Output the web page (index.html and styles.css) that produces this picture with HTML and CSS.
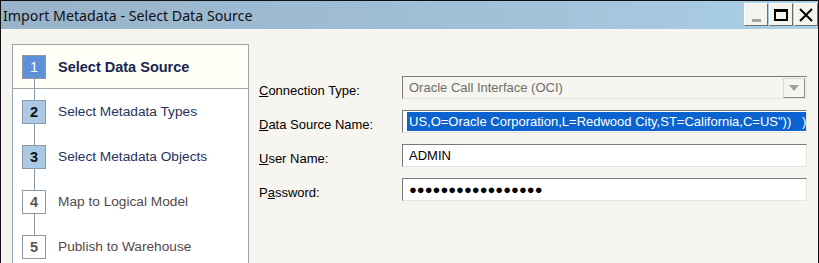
FILE: index.html
```html
<!DOCTYPE html>
<html lang="en">

<head>
    <meta charset="UTF-8">
    <title>Import Metadata - Select Data Source</title>
    <link rel="stylesheet" href="styles.css">
</head>

<body>
    <div class="window">
        <div class="titlebar">
            <span class="title">Import Metadata - Select Data Source</span>
            <div class="title-buttons">
                <div class="tbtn tbtn-min"><span class="min-bar"></span></div>
                <div class="tbtn tbtn-max"><span class="max-box"></span></div>
                <div class="tbtn tbtn-close">
                    <svg width="16" height="16" viewBox="0 0 16 16">
                        <path d="M2 2 L14 14 M14 2 L2 14" stroke="#000" stroke-width="2" fill="none"/>
                    </svg>
                </div>
            </div>
        </div>

        <div class="content">
            <!-- wizard steps -->
            <div class="steps">
                <div class="step step-current">
                    <span class="step-num">1</span>
                    <span class="step-label">Select Data Source</span>
                </div>
                <div class="step step-done">
                    <span class="step-num">2</span>
                    <span class="step-label">Select Metadata Types</span>
                </div>
                <div class="step step-done">
                    <span class="step-num">3</span>
                    <span class="step-label">Select Metadata Objects</span>
                </div>
                <div class="step step-todo">
                    <span class="step-num">4</span>
                    <span class="step-label">Map to Logical Model</span>
                </div>
                <div class="step step-todo">
                    <span class="step-num">5</span>
                    <span class="step-label">Publish to Warehouse</span>
                </div>
            </div>

            <!-- connection form -->
            <div class="form">
                <label class="form-label"><u>C</u>onnection Type:</label>
                <div class="field field-disabled">
                    <span class="field-text">Oracle Call Interface (OCI)</span>
                    <span class="combo-btn">
                        <svg width="10" height="6" viewBox="0 0 10 6"><path d="M0 0 H10 L5 6 Z" fill="#a0a0a0"/></svg>
                    </span>
                </div>

                <label class="form-label"><u>D</u>ata Source Name:</label>
                <div class="field">
                    <span class="field-text selected">US,O=Oracle Corporation,L=Redwood City,ST=California,C=US"))&nbsp;&nbsp;&nbsp;)</span>
                </div>

                <label class="form-label"><u>U</u>ser Name:</label>
                <div class="field">
                    <span class="field-text">ADMIN</span>
                </div>

                <label class="form-label">P<u>a</u>ssword:</label>
                <div class="field">
                    <span class="field-text dots">●●●●●●●●●●●●●●●●●</span>
                </div>
            </div>
        </div>
    </div>
</body>

</html>
```

FILE: styles.css
```css
body {
    margin: 0;
    background: #f6f5ef;
}

.window {
    width: 819px;
    height: 263px;
    box-sizing: border-box;
    border: 1px solid #101010;
    border-bottom: none;
    background: #f6f5ef;
    overflow: hidden;
}

/* title bar */
.titlebar {
    height: 28px;
    display: flex;
    align-items: center;
    justify-content: space-between;
    background: linear-gradient(to right, #98b3ca, #a0c1d8 60%, #aacfe7);
}

.title {
    font-family: "Noto Sans", sans-serif;
    font-size: 14.2px;
    color: #111;
    padding-left: 2px;
}

.title-buttons {
    display: flex;
    gap: 1px;
    align-self: flex-start;
    margin-top: 2px;
}

.tbtn {
    width: 24px;
    height: 23px;
    box-sizing: border-box;
    background: #f4f3ee;
    border: 1px solid;
    border-color: #ffffff #6f6f6f #6f6f6f #ffffff;
    display: flex;
    align-items: center;
    justify-content: center;
}

.tbtn-min {
    align-items: flex-end;
}

.min-bar {
    width: 9px;
    height: 3px;
    background: #a4a4a4;
    margin-bottom: 3px;
}

.max-box {
    width: 14px;
    height: 12px;
    box-sizing: border-box;
    border: 2px solid #000;
    border-top-width: 3px;
}

/* main area */
.content {
    display: flex;
    align-items: flex-start;
    padding: 15px 0 0 11px;
}

.steps {
    width: 237px;
    height: 240px;
    box-sizing: border-box;
    border: 1px solid #9aa6ae;
    background: #ffffff;
    font-family: "Liberation Sans", Arial, sans-serif;
    font-size: 13.7px;
}

.step {
    position: relative;
    height: 45px;
    display: flex;
    align-items: center;
    padding-left: 9px;
}

/* connector between step numbers */
.step:not(:last-child)::after {
    content: "";
    position: absolute;
    left: 21px;
    top: 34px;
    height: 22px;
    width: 1px;
    background: #8d9aa5;
}

.step-current {
    height: 43px;
    background: #fffff7;
    border-bottom: 1px solid #9aa6ae;
}

.step-current::after {
    top: 33px !important;
}

.step-num {
    width: 24px;
    height: 24px;
    box-sizing: border-box;
    border: 1px solid #8d9aa5;
    display: flex;
    align-items: center;
    justify-content: center;
    font-weight: bold;
    font-size: 14.5px;
    margin-right: 12px;
}

.step-current .step-num {
    background: #5d90d6;
    color: #ffffff;
    font-weight: normal;
}

.step-current .step-label {
    font-weight: bold;
    color: #17264f;
    font-size: 14.5px;
}

.step-done .step-num {
    background: #aac9e4;
    color: #111;
}

.step-done .step-label {
    color: #25335c;
}

.step-todo .step-num {
    background: #ffffff;
    color: #555;
}

.step-todo .step-label {
    color: #544848;
}

/* form */
.form {
    display: grid;
    grid-template-columns: 143px 405px;
    row-gap: 11px;
    margin: 32px 0 0 10px;
    font-family: "Liberation Sans", Arial, sans-serif;
    font-size: 13px;
    color: #000;
}

.form-label {
    align-self: center;
    padding-top: 5px;
}

.field {
    height: 23px;
    box-sizing: border-box;
    border: 1px solid;
    border-color: #7a7a7a #e4e4e4 #e4e4e4 #7a7a7a;
    background: #ffffff;
    display: flex;
    align-items: center;
    padding: 0 2px 0 4px;
    white-space: nowrap;
    overflow: hidden;
}

.field-disabled {
    background: #f6f5ef;
    color: #6e6e6e;
    padding-right: 0;
}

.field-disabled .field-text {
    flex: 1;
}

.field-text {
    padding-left: 2px;
}

.selected {
    flex: 1;
    background: #0b63cf;
    color: #ffffff;
    height: 19px;
    line-height: 19px;
}

.combo-btn {
    width: 22px;
    height: 20px;
    box-sizing: border-box;
    border: 1px solid;
    border-color: #d8d8d8 #888 #888 #d8d8d8;
    background: #f6f5ef;
    display: flex;
    align-items: center;
    justify-content: center;
    margin-right: 1px;
}

.dots {
    font-size: 13px;
    letter-spacing: 0;
}
```
